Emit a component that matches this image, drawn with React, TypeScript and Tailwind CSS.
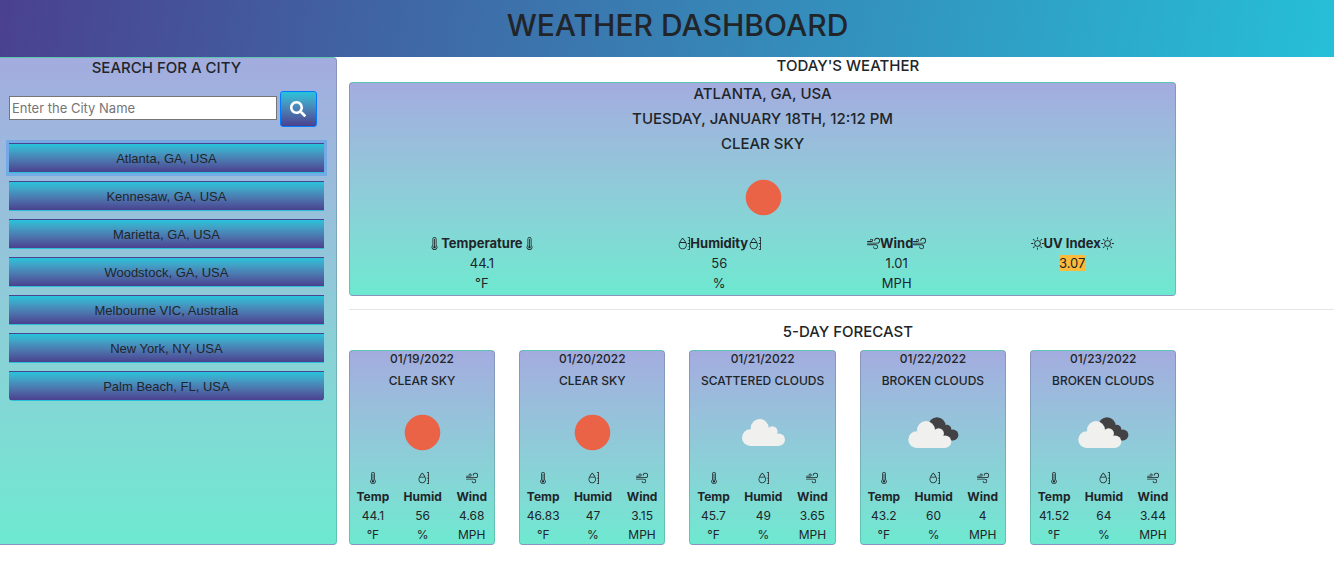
import type { ReactNode } from "react";
import { FaSearch } from "react-icons/fa";
import { BsMoisture, BsSun, BsThermometerHigh, BsWind } from "react-icons/bs";

type Sky = "clear" | "scattered" | "broken";

const cities = [
  "Atlanta, GA, USA",
  "Kennesaw, GA, USA",
  "Marietta, GA, USA",
  "Woodstock, GA, USA",
  "Melbourne VIC, Australia",
  "New York, NY, USA",
  "Palm Beach, FL, USA",
];

const forecast: { date: string; text: string; sky: Sky; temp: string; humid: string; wind: string }[] = [
  { date: "01/19/2022", text: "CLEAR SKY", sky: "clear", temp: "44.1", humid: "56", wind: "4.68" },
  { date: "01/20/2022", text: "CLEAR SKY", sky: "clear", temp: "46.83", humid: "47", wind: "3.15" },
  { date: "01/21/2022", text: "SCATTERED CLOUDS", sky: "scattered", temp: "45.7", humid: "49", wind: "3.65" },
  { date: "01/22/2022", text: "BROKEN CLOUDS", sky: "broken", temp: "43.2", humid: "60", wind: "4" },
  { date: "01/23/2022", text: "BROKEN CLOUDS", sky: "broken", temp: "41.52", humid: "64", wind: "3.44" },
];

const panel =
  "rounded border border-black/15 bg-linear-to-b from-[#a3acdf] to-[#6de9d0]";

function Cloud() {
  return (
    <g fill="#f0f0ee">
      <circle cx="46.7" cy="46" r="9" />
      <circle cx="37.3" cy="55.6" r="8.3" />
      <circle cx="59.3" cy="49.5" r="5.3" />
      <circle cx="65.8" cy="57.7" r="6.2" />
      <path d="M37.3 50 L46 42 L54 46 L62 50 L66 56 V63.9 H37.3Z" />
    </g>
  );
}

function SkyIcon({ sky }: { sky: Sky }) {
  return (
    <svg viewBox="14 14 72 72" className="mx-auto mt-[7px] block size-[72px]" aria-hidden="true">
      {sky === "clear" && <circle cx="50.5" cy="50.5" r="17.8" fill="#ea6347" />}
      {sky === "scattered" && <Cloud />}
      {sky === "broken" && (
        <>
          <g fill="#424143">
            <circle cx="54" cy="43.8" r="8.6" />
            <circle cx="63.6" cy="47.6" r="4.8" />
            <circle cx="70" cy="53" r="5.4" />
            <path d="M54 40 L64 46 L70 50 V58.3 H62 L50 50Z" />
          </g>
          <g transform="translate(-3.7 2)">
            <Cloud />
          </g>
        </>
      )}
    </svg>
  );
}

function Flanked({ icon, children }: { icon: ReactNode; children: ReactNode }) {
  return (
    <span className="flex items-center justify-center">
      {icon}
      {children}
      {icon}
    </span>
  );
}

export default function App() {
  return (
    <div className="overflow-x-hidden bg-white font-['Inter',sans-serif] text-[#212529]">
      <header className="bg-[linear-gradient(100deg,#4a418f,#26bfd7)] pt-[6px] pb-[13px] pl-[21px]">
        <h1 className="text-center text-[30px] leading-[38px] font-medium">WEATHER DASHBOARD</h1>
      </header>

      <div className="flex">
        <aside className={`w-[25.25%] shrink-0 rounded-l-none border-l-0 pr-3 pl-[9px] ${panel}`}>
          <h2 className="text-center text-[15px] leading-5 font-medium">SEARCH FOR A CITY</h2>
          <form className="mt-[13px] mr-[7px] flex items-center gap-[3px]" onSubmit={(e) => e.preventDefault()}>
            <input
              type="text"
              aria-label="City name"
              placeholder="Enter the City Name"
              className="mb-[2px] h-6 min-w-0 flex-1 border border-[#767676] bg-white px-[2px] text-[13px] placeholder:text-[#757575]"
            />
            <button
              type="submit"
              aria-label="Search"
              className="flex h-9 w-[37px] items-center justify-center rounded-[3px] border border-[#007bff] bg-linear-to-b from-[#25c3da] to-[#4a418f] text-white"
            >
              <FaSearch className="size-4" />
            </button>
          </form>
          <ul className="mt-4 flex flex-col gap-2">
            {cities.map((city, i) => (
              <li key={city} className="flex">
                <button
                  type="button"
                  className={`h-[30px] flex-1 border-y border-transparent bg-linear-to-b from-[#25c3da] to-[#4a418f] pt-px font-['Liberation_Sans',sans-serif] text-[13px] ${
                    i === 0 ? "shadow-[0_0_0_3px_rgba(0,123,255,0.25)]" : ""
                  } ${i === cities.length - 1 ? "rounded-b" : ""}`}
                >
                  {city}
                </button>
              </li>
            ))}
          </ul>
        </aside>

        <main className="ml-3 min-w-0 flex-1">
          <h2 className="mb-[7px] pl-[13px] text-center text-[15px] leading-[18px] font-medium">TODAY'S WEATHER</h2>
          <section className={`w-[84%] pb-[2px] ${panel}`}>
            <div className="flex flex-col gap-[5px] pt-px text-center text-[15px] leading-5 font-medium">
              <h3>ATLANTA, GA, USA</h3>
              <p>TUESDAY, JANUARY 18TH, 12:12 PM</p>
              <p>CLEAR SKY</p>
            </div>
            <SkyIcon sky="clear" />
            <table className="w-full table-fixed text-center text-[13px] leading-5">
              <colgroup>
                <col className="w-[32%]" />
                <col className="w-[25.5%]" />
                <col className="w-[17.5%]" />
                <col className="w-[25%]" />
              </colgroup>
              <thead>
                <tr>
                  <th className="p-0"><Flanked icon={<BsThermometerHigh />}>Temperature</Flanked></th>
                  <th className="p-0"><Flanked icon={<BsMoisture />}>Humidity</Flanked></th>
                  <th className="p-0"><Flanked icon={<BsWind />}>Wind</Flanked></th>
                  <th className="p-0"><Flanked icon={<BsSun />}>UV Index</Flanked></th>
                </tr>
              </thead>
              <tbody>
                <tr>
                  <td className="p-0">44.1</td>
                  <td className="p-0">56</td>
                  <td className="p-0">1.01</td>
                  <td className="p-0"><span className="bg-[#fcbb3a]">3.07</span></td>
                </tr>
                <tr>
                  <td className="p-0">°F</td>
                  <td className="p-0">%</td>
                  <td className="p-0">MPH</td>
                  <td className="p-0" />
                </tr>
              </tbody>
            </table>
          </section>

          <hr className="my-[13px] border-t border-black/10" />

          <h2 className="mb-[9px] pl-[13px] text-center text-[15px] leading-[18px] font-medium">5-DAY FORECAST</h2>
          <div className="grid w-[84%] grid-cols-5 gap-6">
            {forecast.map((day) => (
              <section key={day.date} className={panel}>
                <div className="flex flex-col gap-[6px] text-center text-[12px] leading-4 font-medium whitespace-nowrap">
                  <h3>{day.date}</h3>
                  <p>{day.text}</p>
                </div>
                <SkyIcon sky={day.sky} />
                <table className="w-full table-fixed text-center text-[12px] leading-[19px]">
                  <colgroup>
                    <col className="w-[32%]" />
                    <col className="w-[37%]" />
                    <col className="w-[31%]" />
                  </colgroup>
                  <thead>
                    <tr>
                      <td className="h-[19px] p-0"><BsThermometerHigh className="mx-auto" /></td>
                      <td className="h-[19px] p-0"><BsMoisture className="mx-auto" /></td>
                      <td className="h-[19px] p-0"><BsWind className="mx-auto" /></td>
                    </tr>
                    <tr>
                      <th className="p-0">Temp</th>
                      <th className="p-0">Humid</th>
                      <th className="p-0">Wind</th>
                    </tr>
                  </thead>
                  <tbody>
                    <tr>
                      <td className="p-0">{day.temp}</td>
                      <td className="p-0">{day.humid}</td>
                      <td className="p-0">{day.wind}</td>
                    </tr>
                    <tr>
                      <td className="p-0">°F</td>
                      <td className="p-0">%</td>
                      <td className="p-0">MPH</td>
                    </tr>
                  </tbody>
                </table>
              </section>
            ))}
          </div>
        </main>
      </div>
    </div>
  );
}
